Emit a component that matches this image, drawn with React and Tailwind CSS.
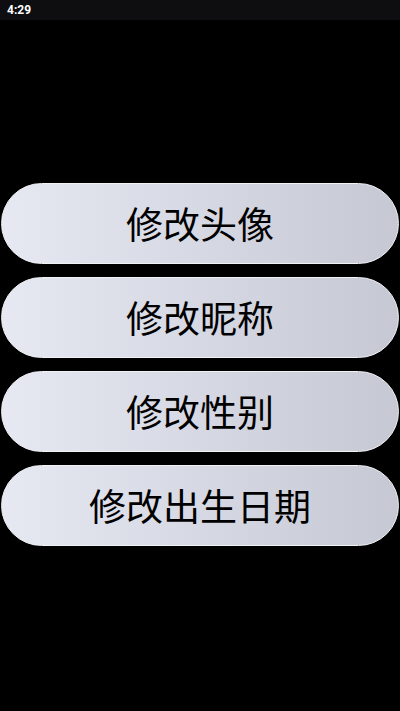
import React from 'react';

const items = ['修改头像', '修改昵称', '修改性别', '修改出生日期'];

const App = () => {
  return (
    <div className="h-[711px] w-[400px] bg-black flex flex-col">
      {/* Status bar */}
      <div className="h-5 bg-[#0e0e11] flex items-center px-[7px]">
        <span className="text-white text-[12px] font-bold font-['Roboto',sans-serif] leading-none">4:29</span>
      </div>

      <div className="flex-1 flex flex-col justify-center gap-[13px] px-px pb-[2px]">
        {items.map((label) => (
          <button
            key={label}
            type="button"
            className="h-[81px] w-full rounded-full border border-[#f1f2f6] bg-gradient-to-r from-[#e6e8f2] to-[#c6c8d4] text-black text-[37px] font-['Noto_Sans_CJK_SC',sans-serif] leading-none flex items-center justify-center"
          >
            {label}
          </button>
        ))}
      </div>
    </div>
  );
};

export default App;
